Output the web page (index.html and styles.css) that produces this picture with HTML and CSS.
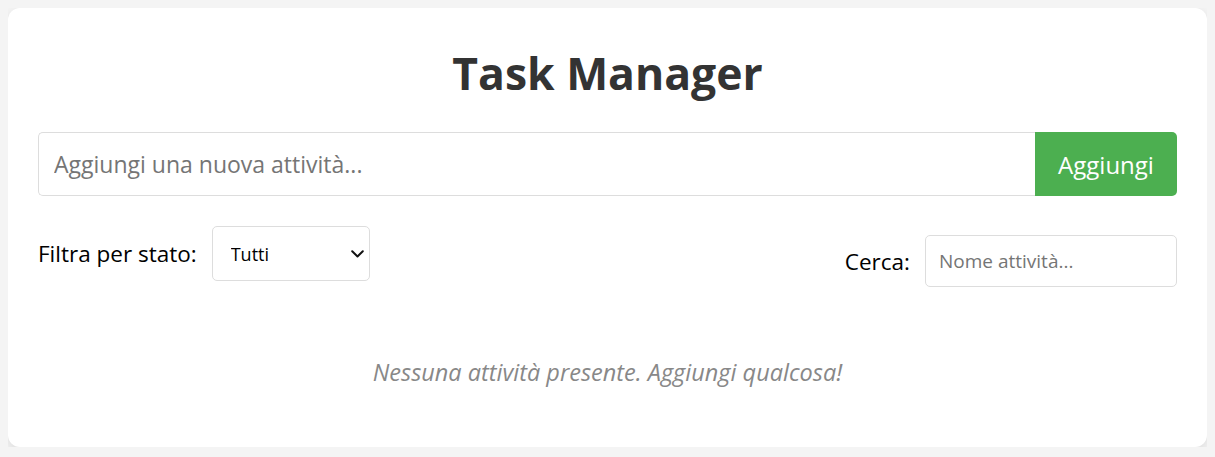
FILE: index.html
```html
<!DOCTYPE html>
<html lang="it">
<head>
<meta charset="utf-8">
<title>Task Manager</title>
<link rel="stylesheet" href="styles.css">
</head>
<body>
<div class="card">
  <h1 class="title">Task Manager</h1>
  <div class="add-row">
    <input class="add-input" type="text" placeholder="Aggiungi una nuova attività...">
    <button class="add-btn">Aggiungi</button>
  </div>
  <div class="filters">
    <div class="group">
      <label class="lbl" for="stato">Filtra per stato:</label>
      <span class="sel-wrap">
        <select id="stato" class="sel">
          <option>Tutti</option>
          <option>Da fare</option>
          <option>Completate</option>
        </select>
        <svg class="chev" width="13" height="8" viewBox="0 0 13 8" aria-hidden="true"><polyline points="1.2,1.2 6.5,6.5 11.8,1.2" fill="none" stroke="#111" stroke-width="2" stroke-linecap="round" stroke-linejoin="round"/></svg>
      </span>
    </div>
    <div class="group search">
      <label class="lbl" for="cerca">Cerca:</label>
      <input id="cerca" class="search-input" type="text" placeholder="Nome attività...">
    </div>
  </div>
  <p class="empty">Nessuna attività presente. Aggiungi qualcosa!</p>
</div>
</body>
</html>
```
FILE: styles.css
```css
html, body {
  background: #f4f4f4;
}
body {
  margin: 8px;
  font-family: "Open Sans", "Noto Sans", sans-serif;
  color: #000;
}
.card {
  background: #fff;
  border-radius: 12px;
  box-shadow: 0 4px 12px rgba(0, 0, 0, 0.1);
  padding: 30px;
  height: 439px;
  box-sizing: border-box;
}
.title {
  margin: 0 0 24px;
  text-align: center;
  font-size: 44.5px;
  font-weight: 700;
  line-height: 70px;
  color: #333;
}
.add-row {
  display: flex;
  height: 64px;
}
.add-input {
  flex: 1;
  min-width: 0;
  box-sizing: border-box;
  height: 64px;
  border: 1px solid #ddd;
  border-right: none;
  border-radius: 5px 0 0 5px;
  padding: 0 15px;
  font-family: inherit;
  font-size: 23px;
  color: #333;
  outline: none;
}
.add-input::placeholder, .search-input::placeholder {
  color: #757575;
}
.add-btn {
  width: 142px;
  border: none;
  border-radius: 0 5px 5px 0;
  background: #4caf50;
  color: #fff;
  font-family: inherit;
  font-size: 24px;
  padding: 0;
}
.filters {
  display: flex;
  justify-content: space-between;
  align-items: flex-start;
  margin-top: 30px;
}
.group {
  display: flex;
  align-items: center;
  gap: 15px;
}
.search {
  margin-top: 9px;
}
.lbl {
  font-size: 22.5px;
}
.sel-wrap {
  position: relative;
  display: flex;
}
.sel {
  -webkit-appearance: none;
  appearance: none;
  width: 158px;
  height: 55px;
  box-sizing: border-box;
  border: 1px solid #ddd;
  border-radius: 5px;
  background: #fff;
  padding: 0 30px 0 18px;
  font-family: inherit;
  font-size: 18px;
  color: #000;
  outline: none;
}
.chev {
  position: absolute;
  right: 6px;
  top: 24px;
  pointer-events: none;
}
.search-input {
  width: 252px;
  height: 52px;
  box-sizing: border-box;
  border: 1px solid #ddd;
  border-radius: 5px;
  padding: 0 13px;
  font-family: inherit;
  font-size: 19px;
  outline: none;
}
.empty {
  margin: 70px 0 0;
  text-align: center;
  font-style: italic;
  color: #888;
  font-size: 23.5px;
  line-height: 30px;
}
```
